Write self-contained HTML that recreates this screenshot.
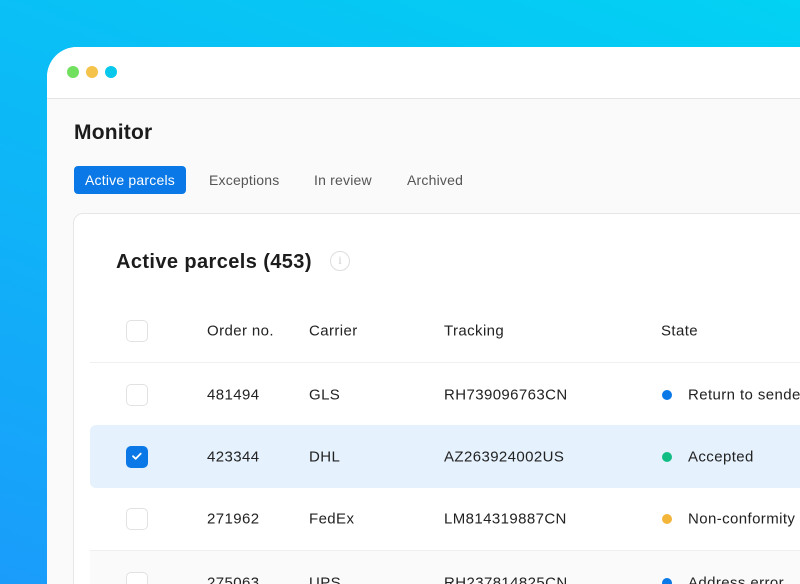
<!DOCTYPE html>
<html><head><style>
*{margin:0;padding:0;box-sizing:border-box}
html,body{width:800px;height:584px;overflow:hidden}
body{position:relative;font-family:"Liberation Sans",sans-serif;background:linear-gradient(200deg,#02d2f3 0%,#0bbcf6 40%,#1a9cfb 100%);}
.win{position:absolute;left:47px;top:47px;width:753px;height:537px;background:#fafafa;border-top-left-radius:30px;overflow:hidden}
.bar{height:52px;background:#fff;border-bottom:1px solid #e4e4e4;position:relative}
.dot{position:absolute;top:19px;width:12px;height:12px;border-radius:50%}
h1{position:absolute;left:27px;top:74px;font-size:21px;font-weight:bold;color:#1c1c1c;letter-spacing:0.2px}
.tabs{position:absolute;left:0;top:119px;font-size:14px;color:#555;letter-spacing:0.2px}
.tab{position:absolute;height:28px;line-height:28px;white-space:nowrap;border-radius:4px}
.tab.on{background:#0a78e6;color:#fff;width:112px;text-align:center}
.card{position:absolute;left:26px;top:166px;width:800px;height:500px;background:#fff;border:1px solid #e6e6e6;border-radius:10px}
h2{position:absolute;left:42px;top:37px;font-size:20px;font-weight:bold;color:#1c1c1c;letter-spacing:0.4px}
.info{position:absolute;left:256px;top:37px;width:20px;height:20px;border:1.5px solid #ddd;border-radius:50%;color:#ccc;font-size:12px;text-align:center;line-height:17px;font-family:"Liberation Serif",serif}
.row{position:absolute;left:16px;width:800px;height:63px;font-size:15px;color:#222;letter-spacing:0.4px}
.row span{position:absolute;top:50%;transform:translateY(-50%);white-space:nowrap}
.cb{position:absolute;left:36px;top:50%;margin-top:-11px;width:22px;height:22px;border:1.5px solid #e2e2e2;border-radius:5px;background:#fff}
.cb.on{background:#0a78e6;border-color:#0a78e6}
.sd{position:absolute;left:572px;top:50%;margin-top:-5px;width:10px;height:10px;border-radius:50%}
</style></head><body>
<div class="win">
<div class="bar"><div class="dot" style="left:20px;background:#72e05f"></div><div class="dot" style="left:39px;background:#f5c24a"></div><div class="dot" style="left:58px;background:#08c8ec"></div></div>
<h1>Monitor</h1>
<div class="tabs"><div class="tab on" style="left:27px">Active parcels</div><div class="tab" style="left:162px">Exceptions</div><div class="tab" style="left:267px">In review</div><div class="tab" style="left:360px">Archived</div></div>
<div class="card">
<h2>Active parcels (453)</h2><div class="info">i</div>
<div class="row" style="top:86px;border-bottom:1px solid #efefef"><div class="cb"></div><span style="left:117px">Order no.</span><span style="left:219px">Carrier</span><span style="left:354px">Tracking</span><span style="left:571px">State</span></div>
<div class="row" style="top:149px"><div class="cb"></div><span style="left:117px">481494</span><span style="left:219px">GLS</span><span style="left:354px">RH739096763CN</span><div class="sd" style="background:#0a78e6"></div><span style="left:598px">Return to sender</span></div>
<div class="row" style="top:211px;background:#e5f1fd;border-radius:6px"><div class="cb on"><svg width="22" height="22" viewBox="0 0 22 22" style="position:absolute;left:-1.5px;top:-1.5px"><path d="M7 11.2l2.7 2.6 5-5.2" fill="none" stroke="#fff" stroke-width="1.8" stroke-linecap="round" stroke-linejoin="round"/></svg></div><span style="left:117px">423344</span><span style="left:219px">DHL</span><span style="left:354px">AZ263924002US</span><div class="sd" style="background:#12bd83"></div><span style="left:598px">Accepted</span></div>
<div class="row" style="top:274px;border-bottom:1px solid #efefef"><div class="cb"></div><span style="left:117px">271962</span><span style="left:219px">FedEx</span><span style="left:354px">LM814319887CN</span><div class="sd" style="background:#f4b63a"></div><span style="left:598px">Non-conformity</span></div>
<div class="row" style="top:337px;background:#fafafa"><div class="cb"></div><span style="left:117px">275063</span><span style="left:219px">UPS</span><span style="left:354px">RH237814825CN</span><div class="sd" style="background:#0a78e6"></div><span style="left:598px">Address error</span></div>
</div>
</div>
</body></html>
